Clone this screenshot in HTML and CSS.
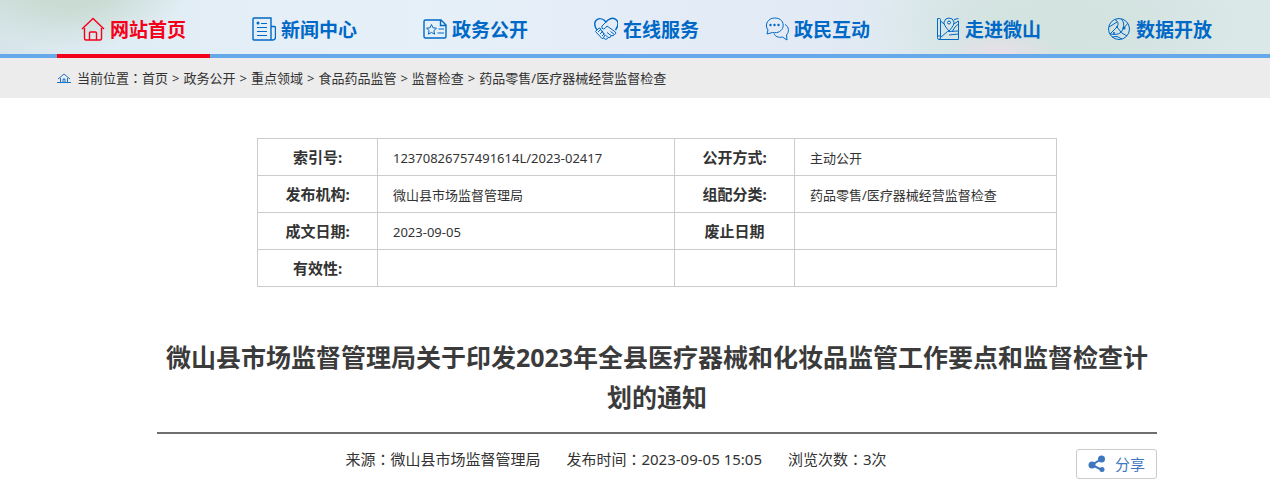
FILE: index.html
```html
<!DOCTYPE html>
<html lang="zh-CN">
<head>
<meta charset="utf-8">
<meta name="viewport" content="width=device-width, initial-scale=1">
<title>微山县市场监督管理局</title>
<link rel="stylesheet" href="styles.css">
</head>
<body>
<header class="header">
  <nav class="nav">
    <a class="nav-item active" href="#">
      <svg class="icon" viewBox="0 0 24 24"><path d="M1 12 12 1.500 23 12M3.500 11v10.500q0 1.500 1.500 1.500h14q1.500 0 1.500-1.500V11M8.500 23v-7q0-1 1-1h5q1 0 1 1v7"/></svg>
      <span>网站首页</span></a>
    <a class="nav-item" href="#">
      <svg class="icon" viewBox="0 0 24 24"><path d="M2 1h17v22H2q-1 0-1-1V2q0-1 1-1zM19 9.500h3q1.500 0 1.500 1.500v9q0 3-2.500 3h-3"/><path class="thin" d="M9 6.500h6M5 10.500h10M5 14.500h10M5 18.500h10"/><circle class="dot" cx="6" cy="6" r="1.500"/></svg>
      <span>新闻中心</span></a>
    <a class="nav-item" href="#">
      <svg class="icon" viewBox="0 0 24 24"><path d="M18 3H2.500Q1 3 1 4.500v15Q1 21 2.500 21h19q1.500 0 1.500-1.500V8zM17.500 3v5.500H23"/><path class="thin" d="m8.500 7.500 1.500 3.300 3.500.4-2.600 2.400.7 3.600-3.100-1.800-3.100 1.800.7-3.600-2.600-2.400 3.500-.4zM15.500 12h5.500M14.500 16H21"/></svg>
      <span>政务公开</span></a>
    <a class="nav-item" href="#">
      <svg class="icon" viewBox="0 0 24 24"><path d="M3 13Q-1 7 2 3.500T10 3l2 2 2-2q5-3.500 8.500 0T21.500 13"/><path class="thin" d="M12 5 8 9q-1 3 1.500 3 1.500 0 3.500-3l8.500 6q1 2-1 2.500l-4-3M20 17.500q0 2-3 1l-4-3M17 19q0 2-3 1.500l-3-3M14 21q-2 3-4.500 0M3 13l2-2q2 0 1.500 2 2 0 1.500 2 2 0 1.500 2.500 2 .500.500 2.500l-1.500 2-7-7.500zM4 15l3-3M6 17l3-3M8 19l2.500-2.500"/></svg>
      <span>在线服务</span></a>
    <a class="nav-item" href="#">
      <svg class="icon" viewBox="0 0 24 24"><path class="thin" d="m2 17 1-4C-1 8 3 1 9.500 1S19 5 18 10c-1 4-5 6.500-10.500 5.500zM20 7.500c4 2 4.500 7.500 1.500 10.500l.5 5-4.500-3c-4 1-7.500-.5-8.500-3.500"/><circle class="dot" cx="5.500" cy="8" r="1.200"/><circle class="dot" cx="9.500" cy="8" r="1.200"/><circle class="dot" cx="13.500" cy="8" r="1.200"/></svg>
      <span>政民互动</span></a>
    <a class="nav-item" href="#">
      <svg class="icon" viewBox="0 0 24 24"><path class="thin" d="M1.500 1.500h2q1 0 1 1v18q0 2-1.500 2t-1.500-2zM1.500 19H4M4.500 4 8 7M3 22.500h19.500V4L17 7.500M4.500 20.500l7-6 11-.5M13 18l9.500-1M16 15l3-5 3.500-3M13 14Q7.500 8 8 5q1-4 5-4t5 4q.5 3-5 9zM18 2.500l4.500-1"/><circle class="thin" cx="13" cy="5.500" r="1.500"/></svg>
      <span>走进微山</span></a>
    <a class="nav-item" href="#">
      <svg class="icon" viewBox="0 0 24 24"><circle class="thin" cx="12" cy="12" r="10.500"/><path class="thin" d="M8 2.500q5 3 2 7.500l-7 7M10 10q4 7 10 9M21 6l-5 6q-2 7-13 5M14 2q4 3 2 10M2 10l8-5M5 20q5-2 10 2"/><circle class="dot" cx="10" cy="10" r="1"/><circle class="dot" cx="17" cy="11" r="1.500"/><circle class="dot" cx="7" cy="16" r="1"/></svg>
      <span>数据开放</span></a>
  </nav>
</header>
<nav class="crumbs">
  <svg class="home" viewBox="0 0 14 10"><path d="M0 9.500h14M1 6l6-5 6 5M3.500 5v4.500M10.500 5v4.500M6 9V6h2v3"/></svg>
  <span>当前位置<span class="colon" lang="zh-TW">：</span></span>
  <a href="#">首页</a><span class="sep">&gt;</span>
  <a href="#">政务公开</a><span class="sep">&gt;</span>
  <a href="#">重点领域</a><span class="sep">&gt;</span>
  <a href="#">食品药品监管</a><span class="sep">&gt;</span>
  <a href="#">监督检查</a><span class="sep">&gt;</span>
  <a href="#">药品零售/医疗器械经营监督检查</a>
</nav>
<main class="main">
  <table class="info">
    <colgroup><col class="col-label"><col class="col-wide"><col class="col-label"><col></colgroup>
    <tbody>
      <tr><th scope="row">索引号:</th><td>12370826757491614L/2023-02417</td><th scope="row">公开方式:</th><td>主动公开</td></tr>
      <tr><th scope="row">发布机构:</th><td>微山县市场监督管理局</td><th scope="row">组配分类:</th><td>药品零售/医疗器械经营监督检查</td></tr>
      <tr><th scope="row">成文日期:</th><td>2023-09-05</td><th scope="row">废止日期</th><td></td></tr>
      <tr><th scope="row">有效性:</th><td></td><th></th><td></td></tr>
    </tbody>
  </table>
  <article class="article">
    <h1 class="title">微山县市场监督管理局关于印发2023年全县医疗器械和化妆品监管工作要点和监督检查计划的通知</h1>
    <div class="meta">
      <span>来源<span class="colon" lang="zh-TW">：</span>微山县市场监督管理局</span>
      <span>发布时间<span class="colon" lang="zh-TW">：</span>2023-09-05 15:05</span>
      <span>浏览次数<span class="colon" lang="zh-TW">：</span>3次</span>
      <button class="share" type="button">
        <svg class="share-icon" viewBox="0 0 18 18"><path d="M14 3.500 4 10l10 5"/><circle cx="13.500" cy="4" r="3.500"/><circle cx="4" cy="10" r="3.500"/><circle cx="14" cy="14.500" r="2.500"/></svg>
        <span>分享</span>
      </button>
    </div>
  </article>
</main>
</body>
</html>
```
FILE: styles.css
```css
* { box-sizing: border-box; }

body {
  margin: 0;
  background: #fff;
  color: #333;
  font-family: "Noto Sans", "Noto Sans CJK SC", sans-serif;
  font-size: 13px;
  line-height: 20px;
}

a { color: inherit; text-decoration: none; }

.colon { font-family: "Noto Sans CJK TC", sans-serif; }

.header {
  padding: 0 34px 0 57px;
  background:
    radial-gradient(ellipse 120px 60px at 70px -12px, #c9dbd2 30%, transparent),
    radial-gradient(ellipse 60px 24px at 1000px 54px, #e6dfe7 10%, transparent),
    radial-gradient(ellipse 190px 80px at 1060px 24px, #d3e3df 30%, transparent),
    linear-gradient(90deg, #d7e5ea 0, #e1edf5 130px, #e6f0f9 420px, #e2eaf5 820px, #dce9ed 960px, #dae8e7 100%);
  box-shadow: inset 0 -4px #65a9ea;
}

.nav {
  display: grid;
  grid-template-columns: repeat(7, 1fr);
  column-gap: 18px;
}

.nav-item {
  display: flex;
  align-items: center;
  justify-content: center;
  gap: 5px;
  height: 58px;
  border-bottom: 4px solid transparent;
  padding-top: 4px;
  color: #0068c6;
  font-size: 19px;
  font-weight: bold;
  white-space: nowrap;
}

.nav-item span { padding-top: 2px; }

.nav-item.active { color: #f5001a; border-color: #f5001a; }

.icon {
  width: 24px;
  height: 24px;
  flex: none;
  fill: none;
  stroke: currentColor;
  stroke-width: 1.4;
}

.icon .thin { stroke-width: 1; }
.icon .dot { fill: currentColor; stroke: none; }

.crumbs {
  display: flex;
  align-items: center;
  min-height: 40px;
  padding: 0 13px 0 57px;
  background: #ececec;
}

.home {
  width: 14px;
  height: 10px;
  margin-right: 6px;
  fill: none;
  stroke: #1b72c4;
}

.sep { margin: 0 4px; }

.main { padding: 40px 13px 10px 57px; }

.info {
  width: 100%;
  max-width: 800px;
  margin: 0 auto;
  border-collapse: collapse;
  table-layout: fixed;
}

.col-label { width: 120px; }
.col-wide { width: 297px; }

.info th, .info td {
  height: 37px;
  border: 1px solid #ccc;
  padding: 2px 15px 0;
  text-align: left;
}

.info th { padding: 0; font-size: 15px; text-align: center; }

.article { max-width: 1000px; margin: 50px auto 0; }

.title {
  margin: 0;
  padding-bottom: 15px;
  border-bottom: 2px solid #6f6f6f;
  color: #3b3b3b;
  font-size: 25px;
  line-height: 40px;
  text-align: center;
}

.meta {
  display: flex;
  justify-content: center;
  gap: 26px;
  position: relative;
  padding: 14px 82px 0 0;
  font-size: 15px;
  line-height: 22px;
}

.share {
  display: flex;
  align-items: center;
  gap: 9px;
  position: absolute;
  right: 0;
  top: 15px;
  height: 30px;
  padding: 0 11px;
  border: 1px solid #ccc;
  border-radius: 3px;
  background: #fff;
  color: #3f76c0;
  font: inherit;
}

.share-icon {
  width: 18px;
  height: 18px;
  fill: currentColor;
  stroke: none;
}

.share-icon path { fill: none; stroke: currentColor; stroke-width: 2; }
```
